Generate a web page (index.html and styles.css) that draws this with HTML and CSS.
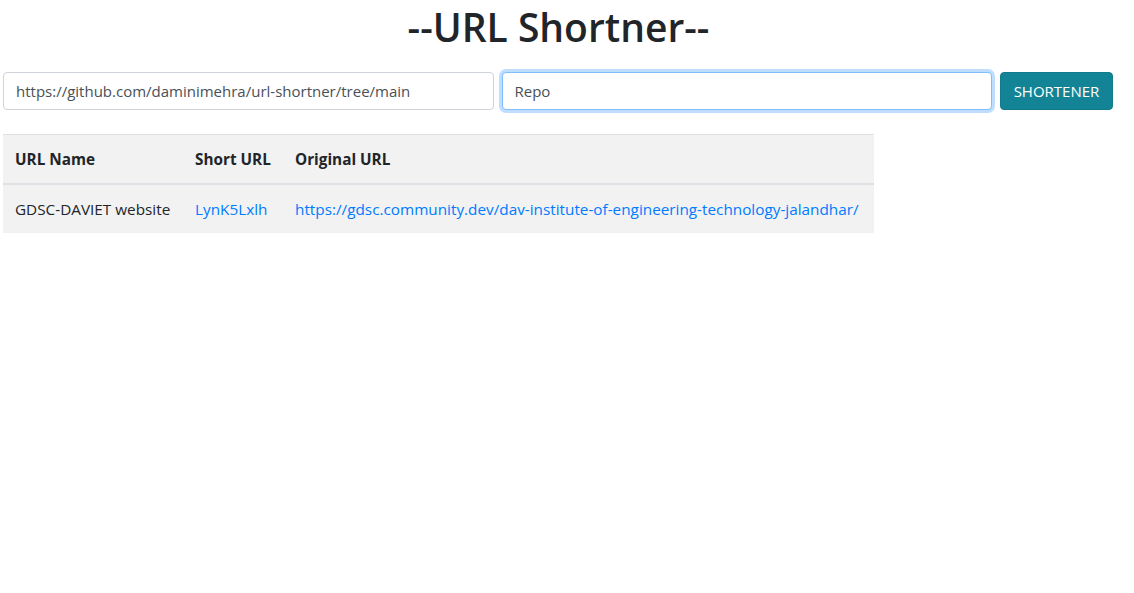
FILE: index.html
```html
<!DOCTYPE html>
<html>
<head>
<meta charset="utf-8">
<link rel="stylesheet" href="styles.css">
</head>
<body>
<h1 class="title">--URL Shortner--</h1>
<form class="form-row">
  <input class="field" type="text" value="https://github.com/daminimehra/url-shortner/tree/main">
  <input class="field focused" type="text" value="Repo">
  <button class="btn" type="button">SHORTENER</button>
</form>
<table class="urls">
  <thead>
    <tr><th class="c1">URL Name</th><th class="c2">Short URL</th><th>Original URL</th></tr>
  </thead>
  <tbody>
    <tr><td>GDSC-DAVIET website</td><td><a href="#">LynK5Lxlh</a></td><td><a href="#">https://gdsc.community.dev/dav-institute-of-engineering-technology-jalandhar/</a></td></tr>
  </tbody>
</table>
</body>
</html>
```
FILE: styles.css
```css
* { box-sizing: border-box; }
body {
  margin: 0;
  font-family: "Open Sans", "Noto Sans", sans-serif;
  font-size: 15px;
  color: #212529;
  background: #fff;
}
.title {
  margin: 4px 0 0;
  padding-right: 17px;
  text-align: center;
  font-size: 39px;
  font-weight: 600;
  line-height: 46px;
}
.form-row {
  display: flex;
  gap: 8px;
  padding: 22px 21px 0 3px;
  margin: 0;
}
.field {
  flex: 1;
  height: 38px;
  padding: 6px 12px;
  font: inherit;
  font-size: 15px;
  color: #495057;
  border: 1px solid #ced4da;
  border-radius: 4px;
  background: #fff;
  outline: none;
}
.field.focused {
  border-color: #80bdff;
  box-shadow: 0 0 0 3px rgba(0, 123, 255, 0.25);
}
.btn {
  width: 113px;
  height: 38px;
  font: inherit;
  font-size: 15px;
  color: #fff;
  background: #138496;
  border: 1px solid #117a8b;
  border-radius: 4px;
  padding: 0;
}
.urls {
  margin: 24px 0 0 3px;
  border-collapse: collapse;
  background: #f2f2f2;
  width: 871px;
  font-size: 15.3px;
}
.urls th, .urls td {
  text-align: left;
  padding: 0 12px;
  white-space: nowrap;
  vertical-align: middle;
}
.urls th {
  height: 49px;
  font-weight: 700;
  border-top: 1px solid #dee2e6;
  border-bottom: 2px solid #dee2e6;
}
.urls td { height: 49px; }
.urls .c1 { width: 180px; }
.urls .c2 { width: 100px; }
.urls a { color: #007bff; text-decoration: none; }
```
